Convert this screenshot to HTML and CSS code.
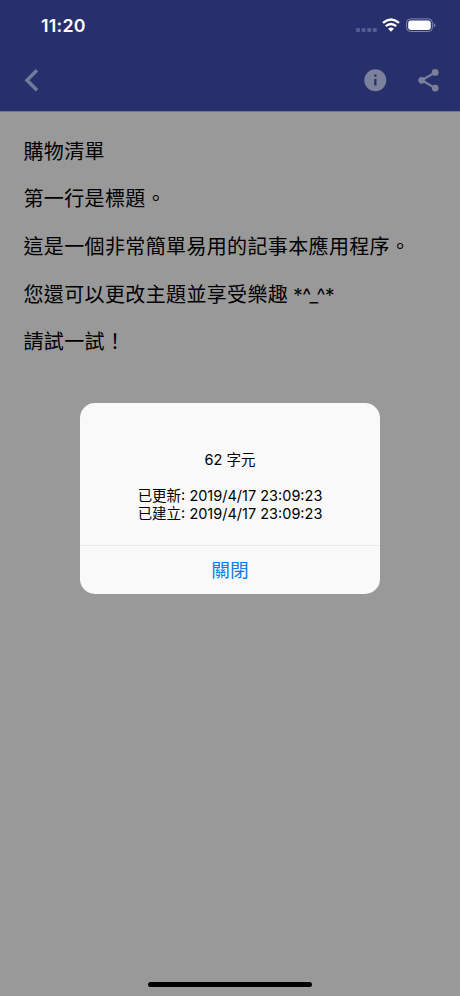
FILE: index.html
```html
<!DOCTYPE html>
<html lang="zh-Hant">
<head>
<meta charset="utf-8">
<title>購物清單</title>
<link rel="stylesheet" href="styles.css">
</head>
<body>
<div class="screen">
  <header class="header">
    <div class="status">
      <span class="time">11:20</span>
      <div class="indicators">
        <svg class="signal" width="22" height="4" viewBox="0 0 22 4"><rect x="0" width="4" height="4" rx="1"/><rect x="5.6" width="4" height="4" rx="1"/><rect x="11.2" width="4" height="4" rx="1"/><rect x="16.8" width="4" height="4" rx="1"/></svg>
        <svg class="wifi" width="18" height="14" viewBox="0 0 18 14"><path d="M1 4.9Q9-1.9 17 4.9M3.8 8.2Q9 3.8 14.2 8.2" fill="none" stroke="#fff" stroke-width="2.4"/><path d="M6.1 10.8Q9 8.4 11.9 10.8L9 13.7Z" fill="#fff"/></svg>
        <svg class="battery" width="30" height="14" viewBox="0 0 30 14"><rect x=".6" y=".9" width="25.8" height="12.6" rx="3.8" fill="none" stroke="#8087b0" stroke-width="1"/><rect x="2.2" y="2.5" width="22.6" height="9.4" rx="2.4" fill="#fff"/><path d="M27.8 5Q29.4 5.7 29.4 7.2T27.8 9.4Z" fill="#7d84ad"/></svg>
      </div>
    </div>
    <nav class="toolbar">
      <svg class="back" width="16" height="24" viewBox="0 0 16 24"><path d="M14 2.2L4 12.2L14 22.2" fill="none" stroke="#717b99" stroke-width="3.5"/></svg>
      <div class="actions">
        <svg width="24" height="24" viewBox="0 0 24 24"><path fill="#7b809b" fill-rule="evenodd" d="M12.3 1.2a11 11 0 1 0 0 22a11 11 0 1 0 0-22zM11.2 6.5h2.3v2.3h-2.3zM11.2 11h2.3v6.6h-2.3z"/></svg>
        <svg width="24" height="24" viewBox="0 0 24 24"><g fill="#7b809b"><circle cx="19.2" cy="4.4" r="3.4"/><circle cx="5.7" cy="12.3" r="3.4"/><circle cx="19.2" cy="20.1" r="3.4"/></g><path d="M19.2 4.4L5.7 12.3L19.2 20.1" fill="none" stroke="#7b809b" stroke-width="2.2"/></svg>
      </div>
    </nav>
  </header>
  <main class="note">
    <p>購物清單</p>
    <p>第一行是標題。</p>
    <p>這是一個非常簡單易用的記事本應用程序。</p>
    <p>您還可以更改主題並享受樂趣<span class="face"> *^_^*</span></p>
    <p>請試一試！</p>
  </main>
  <div class="home-bar"></div>
  <div class="overlay">
    <section class="dialog">
      <div class="message">
        <p class="count">62 字元</p>
        <p>已更新: 2019/4/17 23:09:23</p>
        <p>已建立: 2019/4/17 23:09:23</p>
      </div>
      <button class="close">關閉</button>
    </section>
  </div>
</div>
</body>
</html>
```
FILE: styles.css
```css
* { box-sizing: border-box; }
body, p { margin: 0; }
body { font-family: Inter, "Noto Sans CJK TC", sans-serif; }
svg { display: block; }

.screen {
  position: relative;
  display: flex;
  flex-direction: column;
  height: 996px;
  overflow: hidden;
  background: #999;
  color: #000;
}

.header {
  height: 112px;
  background: #27306d;
  border-bottom: 1px solid #737a95;
}
.status {
  display: flex;
  align-items: center;
  justify-content: space-between;
  height: 50px;
  padding: 0 24px 0 41px;
}
.time {
  color: #fff;
  font-size: 17.8px;
  font-weight: 600;
  line-height: 20px;
  letter-spacing: 0.25px;
  padding-top: 1px;
}
.indicators { display: flex; align-items: center; }
.signal { fill: #545c91; margin: 10px 4.5px 0 0; }
.wifi { margin-right: 6px; }
.toolbar {
  display: flex;
  align-items: center;
  justify-content: space-between;
  height: 60px;
  padding: 0 20px 0 23px;
}
.actions { display: flex; gap: 29px; }

.note {
  flex: 1;
  padding: 16.9px 24px 0 23.5px;
  font-size: 20px;
  line-height: 47.6px;
  letter-spacing: 0.36px;
  white-space: nowrap;
}
.note p { height: 47.6px; }
.face {
  font-size: 19px;
  line-height: 1;
  letter-spacing: -0.4px;
}

.home-bar {
  width: 164px;
  height: 5px;
  margin: 0 auto 9.5px;
  border-radius: 3px;
  background: #000;
}

.overlay {
  position: absolute;
  inset: 0;
  display: flex;
  align-items: center;
  justify-content: center;
}
.dialog {
  width: 300px;
  height: 191px;
  overflow: hidden;
  border-radius: 15px;
  background: #f9f9f9;
}
.message {
  height: 143px;
  padding-top: 48.5px;
  border-bottom: 1px solid #e7e8e8;
  font-size: 14.5px;
  line-height: 18px;
  text-align: center;
}
.count { margin-bottom: 17.5px; }
.close {
  display: block;
  width: 100%;
  height: 48px;
  padding: 0 0 2px;
  border: 0;
  background: none;
  color: #087ef5;
  font: 18.7px/46px "Noto Sans CJK TC", sans-serif;
}
```
